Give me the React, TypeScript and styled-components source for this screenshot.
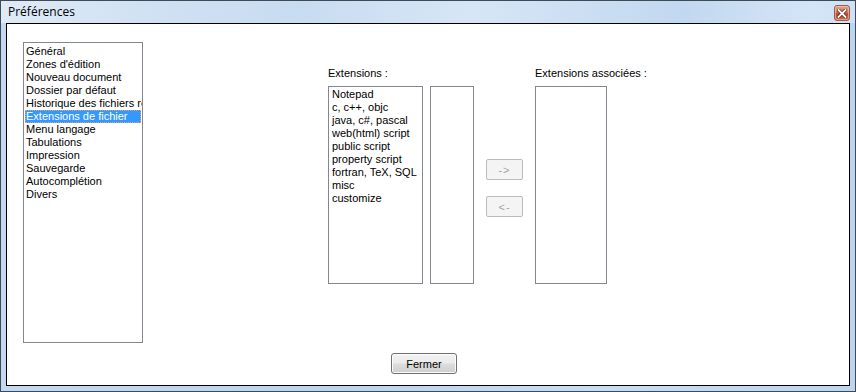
import React from "react";
import styled, { createGlobalStyle } from "styled-components";

const Global = createGlobalStyle`
  html, body { margin: 0; padding: 0; background: #ffffff; }
  #root { width: 856px; height: 392px; }
  * { box-sizing: border-box; }
`;

const Window = styled.div`
  width: 856px;
  height: 392px;
  border: 1px solid #3f4a57;
  background: linear-gradient(to right, #c4d9ef 0%, #bcd4ee 40%, #c9ddf2 70%, #bdd5ef 100%);
  display: flex;
  flex-direction: column;
  font-family: "Liberation Sans", Arial, sans-serif;
  font-size: 11px;
  color: #000;
`;

const TitleBar = styled.div`
  height: 22px;
  flex: none;
  display: flex;
  align-items: center;
  justify-content: space-between;
  padding: 0 5px 0 7px;
  background: linear-gradient(to right, #dfeaf6 0%, #cfe1f3 18%, #c8dcf1 35%, #d6e6f6 55%, #c2d8f0 80%, #d4e5f7 95%, #cfe1f4 100%);
`;

const Title = styled.span`
  font-family: "Open Sans", "Noto Sans", sans-serif;
  font-size: 12px;
  color: #000;
  padding-bottom: 1px;
`;

const CloseBtn = styled.div`
  width: 16px;
  height: 16px;
  margin-top: 2px;
  border: 1px solid #9a5a4c;
  border-radius: 3px;
  background: linear-gradient(to bottom, #e9a38c 0%, #d97559 45%, #c5462a 55%, #d06a45 100%);
  box-shadow: inset 0 0 0 1px rgba(255, 210, 195, 0.55);
  display: flex;
  align-items: center;
  justify-content: center;
`;

const Content = styled.div`
  flex: 1;
  margin: 0 5px 5px 5px;
  border: 1px solid #000;
  background: #ffffff;
  display: flex;
  flex-direction: column;
  padding: 18px 0 0 16px;
`;

const TopRow = styled.div`
  display: flex;
  align-items: flex-start;
`;

const ListBox = styled.div<{ $w: number; $h: number; $pad?: number; $top?: number }>`
  width: ${(p) => p.$w}px;
  height: ${(p) => p.$h}px;
  border: 1px solid #828790;
  background: #fff;
  padding: ${(p) => p.$top ?? 1}px ${(p) => p.$pad ?? 1}px 0;
  overflow: hidden;
  flex: none;
`;

const Item = styled.div<{ $sel?: boolean }>`
  height: 13px;
  line-height: 13px;
  white-space: nowrap;
  padding-left: 1px;
  background: ${(p) => (p.$sel ? "#3399ff" : "transparent")};
  color: ${(p) => (p.$sel ? "#fff" : "#000")};
  outline: ${(p) => (p.$sel ? "1px dotted #e8a25a" : "none")};
  outline-offset: -1px;
`;

const Group = styled.div`
  display: flex;
  align-items: flex-start;
  margin-left: 185px;
  margin-top: 25px;
`;

const Column = styled.div`
  display: flex;
  flex-direction: column;
`;

const Label = styled.div`
  height: 13px;
  line-height: 13px;
  margin-bottom: 6px;
  white-space: nowrap;
`;

const Lists = styled.div`
  display: flex;
  gap: 7px;
`;

const Arrows = styled.div`
  display: flex;
  flex-direction: column;
  gap: 16px;
  margin: 92px 12px 0 12px;
`;

const ArrowBtn = styled.div`
  width: 37px;
  height: 21px;
  border: 1px solid #b8bcc0;
  border-radius: 2px;
  background: #f4f4f4;
  color: #a3a3a3;
  display: flex;
  align-items: center;
  justify-content: center;
  font-size: 11px;
  letter-spacing: 1px;
`;

const Footer = styled.div`
  display: flex;
  justify-content: center;
  padding-right: 24px;
  margin-top: 10px;
`;

const Button = styled.div`
  width: 66px;
  height: 21px;
  border: 1px solid #707070;
  border-radius: 3px;
  background: linear-gradient(to bottom, #f2f2f2 0%, #ebebeb 48%, #dddddd 52%, #cfcfcf 100%);
  box-shadow: inset 0 0 0 1px #fcfcfc;
  display: flex;
  align-items: center;
  justify-content: center;
  font-size: 11px;
  color: #000;
`;

const categories = [
  "Général",
  "Zones d'édition",
  "Nouveau document",
  "Dossier par défaut",
  "Historique des fichiers récents",
  "Extensions de fichier",
  "Menu langage",
  "Tabulations",
  "Impression",
  "Sauvegarde",
  "Autocomplétion",
  "Divers",
];

const extensions = [
  "Notepad",
  "c, c++, objc",
  "java, c#, pascal",
  "web(html) script",
  "public script",
  "property script",
  "fortran, TeX, SQL",
  "misc",
  "customize",
];

export default function App() {
  return (
    <>
      <Global />
      <Window>
        <TitleBar>
          <Title>Préférences</Title>
          <CloseBtn>
            <svg width="10" height="9" viewBox="0 0 10 9">
              <path
                d="M1.5 1 L8.5 8 M8.5 1 L1.5 8"
                stroke="#5a2a20"
                strokeWidth="3.4"
                strokeLinecap="square"
              />
              <path
                d="M1.5 1 L8.5 8 M8.5 1 L1.5 8"
                stroke="#ffffff"
                strokeWidth="1.8"
                strokeLinecap="square"
              />
            </svg>
          </CloseBtn>
        </TitleBar>
        <Content>
          <TopRow>
            <ListBox $w={120} $h={301} $top={2}>
              {categories.map((c, i) => (
                <Item key={c} $sel={i === 5}>
                  {c}
                </Item>
              ))}
            </ListBox>
            <Group>
              <Column>
                <Label>Extensions :</Label>
                <Lists>
                  <ListBox $w={95} $h={198} $pad={2}>
                    {extensions.map((e) => (
                      <Item key={e}>{e}</Item>
                    ))}
                  </ListBox>
                  <ListBox $w={44} $h={198} />
                </Lists>
              </Column>
              <Arrows>
                <ArrowBtn>-&gt;</ArrowBtn>
                <ArrowBtn>&lt;-</ArrowBtn>
              </Arrows>
              <Column>
                <Label>Extensions associées :</Label>
                <ListBox $w={72} $h={198} />
              </Column>
            </Group>
          </TopRow>
          <Footer>
            <Button>Fermer</Button>
          </Footer>
        </Content>
      </Window>
    </>
  );
}
